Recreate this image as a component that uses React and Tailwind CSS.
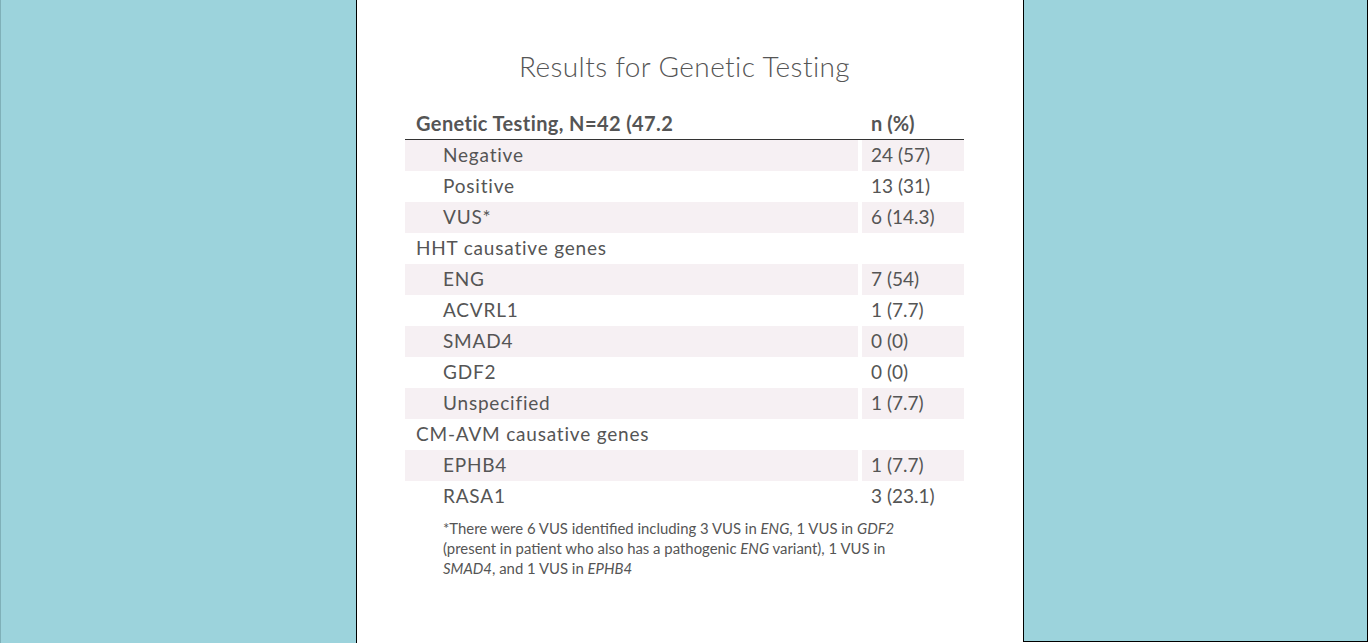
const rows = [
  { label: 'Negative', value: '24 (57)', indent: true, shade: true },
  { label: 'Positive', value: '13 (31)', indent: true },
  { label: 'VUS*', value: '6 (14.3)', indent: true, shade: true },
  { label: 'HHT causative genes', value: '' },
  { label: 'ENG', value: '7 (54)', indent: true, shade: true },
  { label: 'ACVRL1', value: '1 (7.7)', indent: true },
  { label: 'SMAD4', value: '0 (0)', indent: true, shade: true },
  { label: 'GDF2', value: '0 (0)', indent: true },
  { label: 'Unspecified', value: '1 (7.7)', indent: true, shade: true },
  { label: 'CM-AVM causative genes', value: '' },
  { label: 'EPHB4', value: '1 (7.7)', indent: true, shade: true },
  { label: 'RASA1', value: '3 (23.1)', indent: true },
];

export default function App() {
  return (
    <div className="flex h-[643px] w-[1368px] bg-white font-['Lato','Liberation_Sans',sans-serif] text-[#555]">
      <div className="h-full w-[357px] shrink-0 border-l border-r border-l-[#7fb0b8] border-r-black bg-[#9cd3dc]" />

      <div className="flex-1 pl-[48px] pt-[48px]">
        <h1 className="w-[559px] text-center text-[28px] font-light leading-[36px] tracking-[0.4px] text-[#555]">
          Results for Genetic Testing
        </h1>

        <div className="mt-[26px] w-[559px]">
          <div className="grid grid-cols-[453px_4px_102px] border-b border-[#333] pb-[3px] pt-[1px]">
            <div className="pl-[11px] text-[20px] font-bold leading-[25px] tracking-[0.4px]">Genetic Testing, N=42 (47.2</div>
            <div />
            <div className="pl-[9px] text-[20px] font-bold leading-[25px]">n (%)</div>
          </div>

          {rows.map((r) => (
            <div key={r.label} className="grid h-[31px] grid-cols-[453px_4px_102px] items-stretch">
              <div
                className={`flex items-center text-[19px] tracking-[0.8px] ${r.indent ? 'pl-[38px]' : 'pl-[11px]'} ${r.shade ? 'bg-[#f6f0f3]' : ''}`}
              >
                {r.label}
              </div>
              <div />
              <div className={`flex items-center pl-[9px] text-[19px] ${r.shade ? 'bg-[#f6f0f3]' : ''}`}>
                {r.value}
              </div>
            </div>
          ))}

          <p className="mt-[6px] w-[516px] pl-[38px] text-[14.9px] leading-[20px] text-[#555]">
            *There were 6 VUS identified including 3 VUS in <i>ENG</i>, 1 VUS in <i>GDF2</i> (present in patient who
            also has a pathogenic <i>ENG</i> variant), 1 VUS in <i>SMAD4</i>, and 1 VUS in <i>EPHB4</i>
          </p>
        </div>
      </div>

      <div className="h-[642px] w-[345px] shrink-0 border-b border-l border-r border-black bg-[#9cd3dc]" />
    </div>
  );
}
